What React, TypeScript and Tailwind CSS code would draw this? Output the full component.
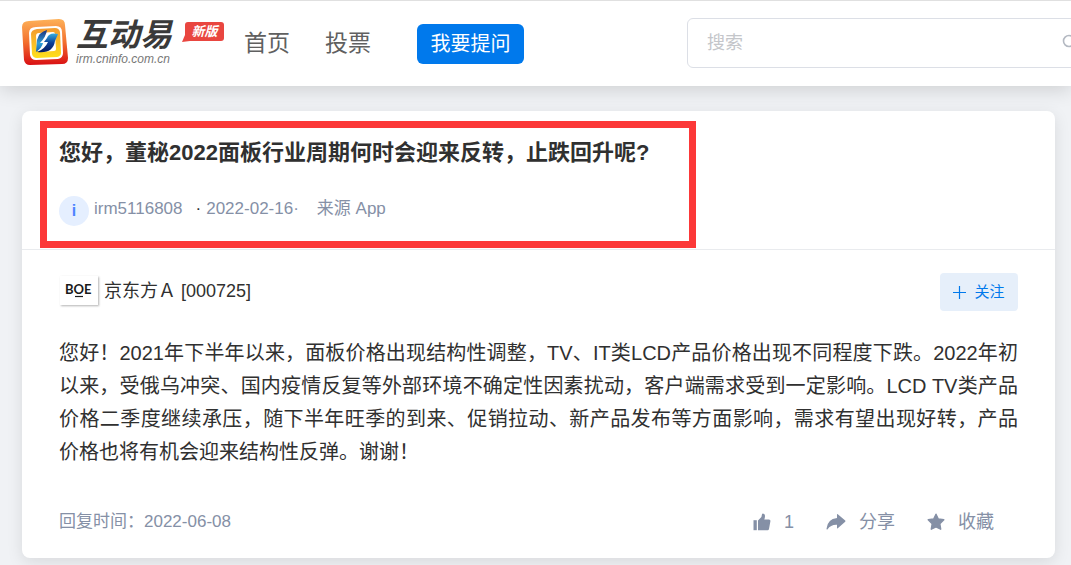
import type { ReactNode } from "react";

const TITLE = "您好\uff0c董秘2022面板行业周期何时会迎来反转\uff0c止跌回升呢?";

const ANSWER = [
  "您好\uff012021年下半年以来\uff0c面板价格出现结构性调整\uff0cTV、IT类LCD产品价格出现不同程度下跌。",
  "2022年初以来\uff0c受俄乌冲突、国内疫情反复等外部环境不确定性因素扰动\uff0c客户端需求受到一定影响。",
  "LCD TV类产品价格二季度继续承压\uff0c随下半年旺季的到来、促销拉动、新产品发布等方面影响\uff0c",
  "需求有望出现好转\uff0c产品价格也将有机会迎来结构性反弹。谢谢\uff01",
].join("");

function LogoMark() {
  return (
    <svg className="h-[46px] w-[46px] shrink-0" viewBox="0 0 46 46" aria-hidden>
      <defs>
        <linearGradient id="frame" x1="0" y1="0" x2="0" y2="1">
          <stop offset="0" stopColor="#fdb158" />
          <stop offset="0.5" stopColor="#f3702e" />
          <stop offset="1" stopColor="#d90f14" />
        </linearGradient>
        <linearGradient id="core" x1="0" y1="0" x2="0" y2="1">
          <stop offset="0" stopColor="#f39a30" />
          <stop offset="1" stopColor="#ffe01a" />
        </linearGradient>
        <linearGradient id="leafLeft" x1="0" y1="0" x2="0" y2="1">
          <stop offset="0" stopColor="#1c2f7c" />
          <stop offset="0.6" stopColor="#2e9fd8" />
          <stop offset="1" stopColor="#1460ac" />
        </linearGradient>
        <linearGradient id="leafRight" x1="0" y1="0" x2="0" y2="1">
          <stop offset="0" stopColor="#35aee0" />
          <stop offset="0.5" stopColor="#0b3f98" />
          <stop offset="1" stopColor="#071a5c" />
        </linearGradient>
      </defs>
      <path d="M7 2 37 0Q43 0 43 6L46 39Q46 45 40 45L8 46Q3 46 2 41L0 8Q0 2 7 2Z" fill="url(#frame)" />
      <path d="M14 8 34 7Q40 7 40 13L41 34Q41 39 36 40L14 41Q9 41 8 36L7 14Q7 8 14 8Z" fill="#fff" />
      <path d="M15 10 33 9Q37 9 38 13L39 34Q39 37 35 38L15 39Q11 39 10 35L9 15Q9 11 15 10Z" fill="url(#core)" />
      <path d="M17 14 31 13Q33 13 33 15L34 30Q34 32 32 32L18 33Q16 33 15 31L14 17Q14 14 17 14Z" fill="#fff" />
      <path d="M25 11Q17 13 15 21L14 33Q20 29 21 24L18 24Q24 18 25 11Z" fill="url(#leafLeft)" />
      <path d="M36 15Q27 13 25 19L22 23 26 23Q23 30 15 33 31 35 33 22Z" fill="url(#leafRight)" />
    </svg>
  );
}

function ThumbIcon() {
  return (
    <svg className="h-[18px] w-[18px]" viewBox="0 0 18 18" fill="currentColor" aria-hidden>
      <path d="M0.5 7.2h3.3v10H0.5z" />
      <path d="M5 7.4 8.4 3.9 9 1.2Q9.2 0.4 10 0.4 12.1 0.6 12 3 12 4.7 11.3 6.5H16Q17.6 6.6 17.4 8.2L16 16Q15.7 17.2 14.6 17.2H5Z" />
    </svg>
  );
}

function ShareIcon() {
  return (
    <svg className="h-[18px] w-5" viewBox="0 0 20 18" fill="currentColor" aria-hidden>
      <path d="M11 1.4Q11 0.6 11.8 1.2L19.2 7.6Q19.8 8.2 19.2 8.8L11.8 15.2Q11 15.8 11 14.8V11.8Q5 11.4 1.4 16.4 0.5 17 0.5 15.8 1.4 6.2 11 5.1Z" />
    </svg>
  );
}

function StarIcon() {
  return (
    <svg className="h-[18px] w-[18px]" viewBox="0 0 18 18" fill="currentColor" stroke="currentColor" strokeWidth="1.4" strokeLinejoin="round" aria-hidden>
      <path d="M9 1.2 11.3 6 16.8 6.8 12.8 10.7 13.7 16.2 9 13.9 4.3 16.2 5.2 10.7 1.2 6.8 6.7 6Z" />
    </svg>
  );
}

function Action({ icon, children }: { icon: ReactNode; children: ReactNode }) {
  return (
    <button type="button" className="flex items-center gap-[13px]">
      {icon}
      <span>{children}</span>
    </button>
  );
}

function Header() {
  return (
    <header className="flex h-[86px] items-center overflow-hidden border-t border-[#e0e0e0] bg-white pl-[22px]">
      <a href="#" className="mb-1 flex shrink-0 items-center" aria-label="互动易">
        <LogoMark />
        <span className="ml-2 flex flex-col gap-0.5">
          <span className="text-[32px] leading-8 font-bold text-[#3a3a3a] italic">互动易</span>
          <span className="text-xs leading-3 text-[#777] italic">irm.cninfo.com.cn</span>
        </span>
      </a>
      <span className="relative mb-6 ml-[13px] flex h-[19px] w-[39px] shrink-0 items-center justify-center rounded-[3px] bg-[#e94640] text-[13px] font-bold text-white italic">
        <svg className="absolute -bottom-px -left-[3px] h-[7px] w-2" viewBox="0 0 8 7" aria-hidden>
          <path d="M3 0 0 7 8 6Z" fill="#e94640" />
        </svg>
        <span className="relative">新版</span>
      </span>
      <nav className="ml-5 flex shrink-0 items-center gap-[35px] text-[23px] text-[#606060]">
        <a href="#">首页</a>
        <a href="#">投票</a>
      </nav>
      <button type="button" className="ml-[46px] h-10 w-[107px] shrink-0 rounded-md bg-[#0079ec] text-xl text-white">
        我要提问
      </button>
      <div className="mb-0.5 ml-[163px] flex h-[50px] w-[410px] shrink-0 items-center rounded-md border border-[#dcdfe6] pl-[19px]">
        <input
          type="search"
          aria-label="搜索"
          placeholder="搜索"
          className="w-[354px] bg-transparent text-lg outline-none placeholder:text-[#c4c6ca]"
        />
        <svg className="mb-1 h-4 w-4" viewBox="0 0 16 16" fill="none" stroke="#b4b9c2" strokeWidth="1.6" aria-hidden>
          <circle cx="8" cy="8" r="5.5" />
          <path d="m12 12 3 3" />
        </svg>
      </div>
    </header>
  );
}

function Question() {
  return (
    <section className="border-b border-[#e9ebee] px-[18px] pt-[10px] pb-px">
      <div className="h-[127px] w-[656px] max-w-full border-[7px] border-[#fc3838] px-3 pt-[9px]">
        <h1 className="text-[22px] leading-8 font-bold text-[#303030]">{TITLE}</h1>
        <div className="mt-[27px] flex h-[30px] items-center text-[17px] text-[#8590a6]">
          <span className="flex h-[30px] w-[30px] items-center justify-center rounded-full bg-[#e5efff] text-base font-bold text-[#4c84ff]">
            i
          </span>
          <a href="#" className="mb-1 ml-[5px]">irm5116808</a>
          <span className="mb-1 ml-[13px] text-[#303030]">·</span>
          <time className="mb-1 ml-[5px]" dateTime="2022-02-16">2022-02-16·</time>
          <span className="mb-1 ml-[18px]">来源 App</span>
        </div>
      </div>
    </section>
  );
}

function Answer() {
  return (
    <section className="px-[37px] pt-[23px] pb-[21px]">
      <div className="flex h-[38px] items-center justify-between">
        <a href="#" className="mb-[3px] ml-px flex items-center gap-[6px] text-lg text-[#303030]">
          <svg className="h-[29px] w-[38px] bg-white shadow-[1px_1px_2px_rgba(0,0,0,0.3)]" viewBox="0 0 38 29" role="img" aria-label="BOE">
            <text x="5" y="18" fontSize="13" fontWeight="700" fill="#1a1a1a" fontFamily="Lato, sans-serif">BOE</text>
            <path d="M15 20.5h8" stroke="#1a1a1a" strokeWidth="1.2" />
          </svg>
          <span>{"京东方\uff21 [000725]"}</span>
        </a>
        <button type="button" className="flex h-[38px] w-[78px] items-center justify-center gap-2 rounded bg-[#e6effa] text-[15px] text-[#0079ec]">
          <svg className="h-[13px] w-[13px]" viewBox="0 0 13 13" stroke="currentColor" strokeWidth="1.2" aria-hidden>
            <path d="M6.5 0v13M0 6.5h13" />
          </svg>
          关注
        </button>
      </div>
      <p className="mt-[26px] text-justify text-xl leading-[33px] text-[#303030]">{ANSWER}</p>
      <footer className="mt-[38px] flex h-[30px] items-center justify-between text-[#8590a6]">
        <span className="text-[17px]">{"回复时间\uff1a2022-06-08"}</span>
        <div className="mr-6 flex items-center gap-8 text-lg">
          <Action icon={<ThumbIcon />}>1</Action>
          <Action icon={<ShareIcon />}>分享</Action>
          <Action icon={<StarIcon />}>收藏</Action>
        </div>
      </footer>
    </section>
  );
}

export default function App() {
  return (
    <div className="min-h-screen overflow-x-hidden bg-[#f0f2f5] font-['Liberation_Sans','Noto_Sans_CJK_SC',sans-serif]" lang="zh-CN">
      <div className="shadow-[0_4px_18px_rgba(0,0,0,0.14)]">
        <Header />
      </div>
      <main className="mt-[25px] mr-4 ml-[22px] rounded-lg bg-white shadow-[0_4px_16px_rgba(0,0,0,0.1)]">
        <Question />
        <Answer />
      </main>
    </div>
  );
}
